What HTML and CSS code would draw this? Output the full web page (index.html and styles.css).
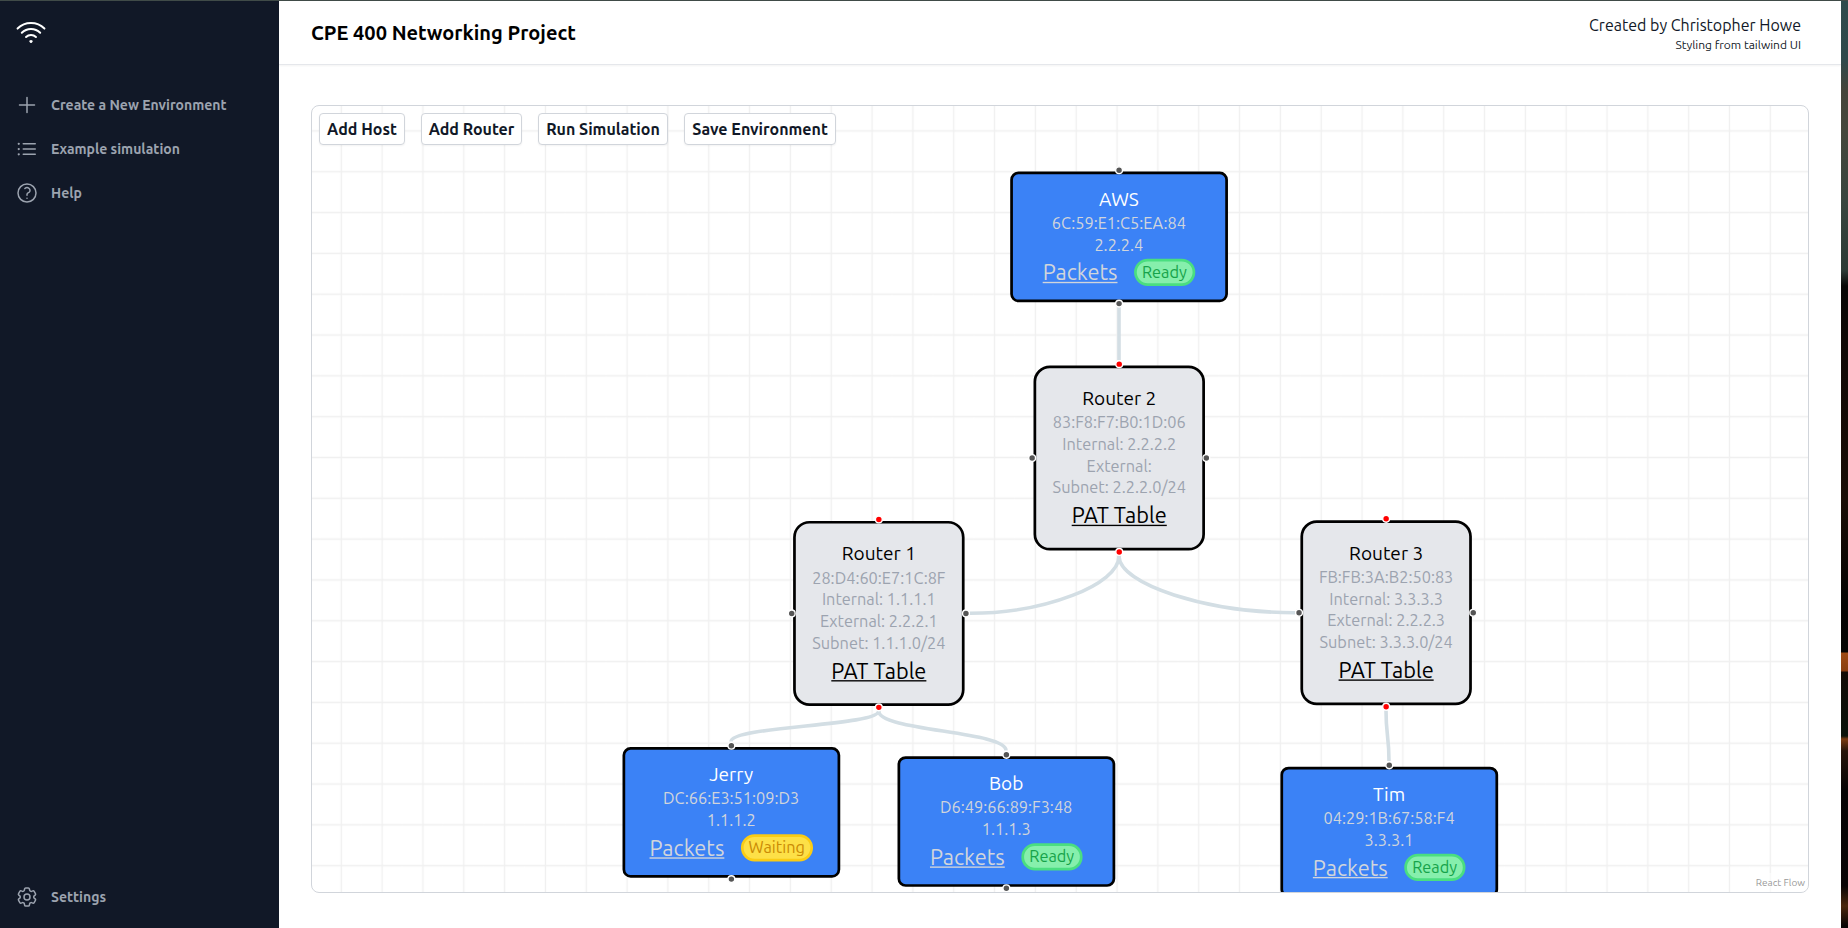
FILE: index.html
```html
<!DOCTYPE html>
<html lang="en">
<head>
<meta charset="utf-8">
<title>CPE 400 Networking Project</title>
<link rel="stylesheet" href="styles.css">
</head>
<body>
<div class="window">
  <aside class="sidebar">
    <svg class="logo" viewBox="0 0 24 24"><path d="M8.288 15.038a5.25 5.25 0 017.424 0M5.106 11.856c3.807-3.808 9.98-3.808 13.788 0M1.924 8.674c5.565-5.565 14.587-5.565 20.152 0M12.53 18.22l-.53.53-.53-.53a.75.75 0 011.06 0z"/></svg>
    <nav class="nav">
      <a class="nav-item"><svg class="icon" viewBox="0 0 24 24"><path d="M12 4.5v15m7.5-7.5h-15"/></svg><span>Create a New Environment</span></a>
      <a class="nav-item"><svg class="icon" viewBox="0 0 24 24"><path d="M8.25 6.75h12M8.25 12h12m-12 5.25h12M3.75 6.75h.007v.008H3.75V6.75zm.375 0a.375.375 0 11-.75 0 .375.375 0 01.75 0zM3.75 12h.007v.008H3.75V12zm.375 0a.375.375 0 11-.75 0 .375.375 0 01.75 0zm-.375 5.25h.007v.008H3.75v-.008zm.375 0a.375.375 0 11-.75 0 .375.375 0 01.75 0z"/></svg><span>Example simulation</span></a>
      <a class="nav-item"><svg class="icon" viewBox="0 0 24 24"><path d="M9.879 7.519c1.171-1.025 3.071-1.025 4.242 0 1.172 1.025 1.172 2.687 0 3.712-.203.179-.43.326-.67.442-.745.361-1.45.999-1.45 1.827v.75M21 12a9 9 0 11-18 0 9 9 0 0118 0zm-9 5.25h.008v.008H12v-.008z"/></svg><span>Help</span></a>
    </nav>
    <a class="nav-item settings"><svg class="icon" viewBox="0 0 24 24"><path d="M9.594 3.94c.09-.542.56-.94 1.11-.94h2.593c.55 0 1.02.398 1.11.94l.213 1.281c.063.374.313.686.645.87.074.04.147.083.22.127.324.196.72.257 1.075.124l1.217-.456a1.125 1.125 0 011.37.49l1.296 2.247a1.125 1.125 0 01-.26 1.431l-1.003.827c-.293.24-.438.613-.431.992a6.759 6.759 0 010 .255c-.007.378.138.75.43.99l1.005.828c.424.35.534.954.26 1.43l-1.298 2.247a1.125 1.125 0 01-1.369.491l-1.217-.456c-.355-.133-.75-.072-1.076.124a6.57 6.57 0 01-.22.128c-.331.183-.581.495-.644.869l-.213 1.28c-.09.543-.56.941-1.11.941h-2.594c-.55 0-1.02-.398-1.11-.94l-.213-1.281c-.062-.374-.312-.686-.644-.87a6.52 6.52 0 01-.22-.127c-.325-.196-.72-.257-1.076-.124l-1.217.456a1.125 1.125 0 01-1.369-.49l-1.297-2.247a1.125 1.125 0 01.26-1.431l1.004-.827c.292-.24.437-.613.43-.992a6.932 6.932 0 010-.255c.007-.378-.138-.75-.43-.99l-1.004-.828a1.125 1.125 0 01-.26-1.43l1.297-2.247a1.125 1.125 0 011.37-.491l1.216.456c.356.133.751.072 1.076-.124.072-.044.146-.087.22-.128.332-.183.582-.495.644-.869l.214-1.281z"/><path d="M15 12a3 3 0 11-6 0 3 3 0 016 0z"/></svg><span>Settings</span></a>
  </aside>
  <div class="content">
    <header class="header">
      <h1 class="title">CPE 400 Networking Project</h1>
      <div class="credits">
        <div class="author">Created by Christopher Howe</div>
        <div class="styling">Styling from tailwind UI</div>
      </div>
    </header>
    <main class="main">
      <div class="flow">
        <svg class="canvas" width="1496" height="786">
          <defs>
            <pattern id="grid" x="8.9" y="4.5" width="40.83" height="40.82" patternUnits="userSpaceOnUse">
              <path d="M20.41 0V40.82M0 20.41H40.83"/>
            </pattern>
          </defs>
          <rect width="1496" height="786" fill="url(#grid)"/>
          <g class="edges">
            <path d="M807 201V254"/>
            <path d="M807 450C807 478.6 732.5 507.3 658 507.3"/>
            <path d="M807 450C807 478.3 895 506.7 983 506.7"/>
            <path d="M566.7 605C566.7 620 419 620 419 635.5"/>
            <path d="M566.7 605C566.7 625 694 625 694 644.5"/>
            <path d="M1074 604.4C1074 630 1077 630 1077 655"/>
          </g>
        </svg>
        <div class="toolbar">
          <button class="btn b-host">Add Host</button>
          <button class="btn b-router">Add Router</button>
          <button class="btn b-run">Run Simulation</button>
          <button class="btn b-save">Save Environment</button>
        </div>

        <div class="node host aws">
          <i class="handle top"></i><i class="handle bottom"></i>
          <div class="name">AWS</div><div class="info">6C:59:E1:C5:EA:84</div><div class="info">2.2.2.4</div>
          <div class="row"><a class="packets">Packets</a><span class="badge ready">Ready</span></div>
        </div>
        <div class="node host jerry">
          <i class="handle top"></i><i class="handle bottom"></i>
          <div class="name">Jerry</div><div class="info">DC:66:E3:51:09:D3</div><div class="info">1.1.1.2</div>
          <div class="row"><a class="packets">Packets</a><span class="badge waiting">Waiting</span></div>
        </div>
        <div class="node host bob">
          <i class="handle top"></i><i class="handle bottom"></i>
          <div class="name">Bob</div><div class="info">D6:49:66:89:F3:48</div><div class="info">1.1.1.3</div>
          <div class="row"><a class="packets">Packets</a><span class="badge ready">Ready</span></div>
        </div>
        <div class="node host tim">
          <i class="handle top"></i><i class="handle bottom"></i>
          <div class="name">Tim</div><div class="info">04:29:1B:67:58:F4</div><div class="info">3.3.3.1</div>
          <div class="row"><a class="packets">Packets</a><span class="badge ready">Ready</span></div>
        </div>

        <div class="node router r1">
          <i class="handle top red"></i><i class="handle bottom red"></i><i class="handle left"></i><i class="handle right"></i>
          <div class="name">Router 1</div><div class="info">28:D4:60:E7:1C:8F</div><div class="info">Internal: 1.1.1.1</div><div class="info">External: 2.2.2.1</div><div class="info">Subnet: 1.1.1.0/24</div>
          <div class="row"><a class="pat">PAT Table</a></div>
        </div>
        <div class="node router r2">
          <i class="handle top red"></i><i class="handle bottom red"></i><i class="handle left"></i><i class="handle right"></i>
          <div class="name">Router 2</div><div class="info">83:F8:F7:B0:1D:06</div><div class="info">Internal: 2.2.2.2</div><div class="info">External:</div><div class="info">Subnet: 2.2.2.0/24</div>
          <div class="row"><a class="pat">PAT Table</a></div>
        </div>
        <div class="node router r3">
          <i class="handle top red"></i><i class="handle bottom red"></i><i class="handle left"></i><i class="handle right"></i>
          <div class="name">Router 3</div><div class="info">FB:FB:3A:B2:50:83</div><div class="info">Internal: 3.3.3.3</div><div class="info">External: 2.2.2.3</div><div class="info">Subnet: 3.3.3.0/24</div>
          <div class="row"><a class="pat">PAT Table</a></div>
        </div>
        <div class="attribution">React Flow</div>
      </div>
    </main>
  </div>
  <div class="desktop"></div>
</div>
</body>
</html>
```
FILE: styles.css
```css
* { box-sizing: border-box; }
body { margin: 0; font-family: Ubuntu, "Noto Sans", sans-serif; color: #111827; background: #fff; }
.window { display: flex; height: 928px; border-top: 1px solid #404b48; overflow: hidden; }

.sidebar { width: 279px; flex: none; display: flex; flex-direction: column; background: #111827; padding: 16px 15px 19px; }
.logo { width: 32px; height: 32px; fill: none; stroke: #fff; stroke-width: 1.5; stroke-linecap: round; stroke-linejoin: round; }
.nav { margin-top: 44px; display: flex; flex-direction: column; gap: 20px; }
.nav-item { display: flex; align-items: center; gap: 12px; height: 24px; color: #9ca3af; font-size: 14px; font-weight: 600; line-height: 20px; white-space: nowrap; }
.icon { width: 24px; height: 24px; flex: none; fill: none; stroke: #9ca3af; stroke-width: 1.5; stroke-linecap: round; stroke-linejoin: round; }
.settings { margin-top: auto; }

.content { width: 1562px; flex: none; display: flex; flex-direction: column; background: #fff; }
.header { height: 64px; flex: none; display: flex; justify-content: space-between; align-items: center; padding: 0 40px 0 32px; border-bottom: 1px solid #e5e7eb; box-shadow: 0 1px 2px rgba(0,0,0,.05); white-space: nowrap; }
.title { margin: 0; font-size: 20px; font-weight: 600; color: #000; line-height: 28px; }
.credits { text-align: right; }
.author { font-size: 16px; line-height: 24px; }
.styling { font-size: 12px; line-height: 16px; }
.main { flex: 1; padding: 40px 32px 34px; display: flex; }

.flow { position: relative; flex: 1; height: 788px; border: 1px solid #d1d5db; border-radius: 8px; overflow: hidden; }
.canvas { position: absolute; left: 0; top: 0; }
.canvas pattern path { fill: none; stroke: #f0f0f0; stroke-width: 1.36; }
.edges path { fill: none; stroke: #d3dee4; stroke-width: 3.6; }
.toolbar { position: relative; display: flex; gap: 16px; padding: 7px; }
.btn { height: 32px; padding: 0 0 1px; border: 1px solid #d1d5db; border-radius: 4px; background: #fff; box-shadow: 0 1px 2px rgba(0,0,0,.05); color: #111827; font-family: inherit; font-size: 16px; font-weight: 600; line-height: 24px; white-space: nowrap; }
.b-host { width: 86px; }
.b-router { width: 101px; }
.b-run { width: 130px; }
.b-save { width: 152px; }

.node { position: absolute; left: 0; top: 0; transform: translate(var(--x), var(--y)) scale(1.361); transform-origin: 0 0; border: 2px solid #000; text-align: center; white-space: nowrap; }
.host { width: 159.7px; height: 96px; padding: 8px 0; border-radius: 6px; background: #3b82f6; color: #d1d5db; }
.router { width: 126px; height: 136px; padding: 12px 0; border-radius: 12px; background: #e5e7eb; color: #9ca3af; }
.aws { --x: 698.2px; --y: 65.6px; }
.jerry { --x: 310.5px; --y: 641.1px; }
.bob { --x: 585.5px; --y: 650.2px; }
.tim { --x: 968.4px; --y: 660.7px; }
.r1 { --x: 481.1px; --y: 414.9px; }
.r2 { --x: 721.5px; --y: 259.5px; }
.r3 { --x: 988.4px; --y: 414.2px; }
.name { font-size: 14px; line-height: 20px; color: #000; }
.host .name { color: #fff; }
.info { font-size: 12px; line-height: 16px; }
.row { display: flex; justify-content: center; align-items: center; gap: 12px; height: 24px; }
.packets, .pat { font-size: 16px; line-height: 24px; text-decoration: underline; }
.pat { color: #000; }
.badge { height: 20px; border: 2px solid; border-radius: 11px; font-size: 12px; line-height: 16px; }
.ready { width: 45px; background: #86efac; border-color: #4ade80; color: #16a34a; }
.waiting { width: 53px; background: #fde047; border-color: #facc15; color: #ca8a04; }

.handle { position: absolute; width: 6px; height: 6px; border: 1px solid #fff; border-radius: 50%; background: #555; }
.red { background: #f00; }
.handle.top { top: -6px; left: calc(50% - 3px); }
.handle.bottom { bottom: -6px; left: calc(50% - 3px); }
.handle.left { left: -6px; top: calc(50% - 3px); }
.handle.right { right: -6px; top: calc(50% - 3px); }
.attribution { position: absolute; right: 0; bottom: 0; padding: 2px 3px; background: rgba(255,255,255,.5); color: #999; font-size: 10px; line-height: 15px; }

.desktop { width: 7px; flex: none; background: linear-gradient(#2f4a4c 0, #30494b 60px, #45443a 90px, #45473c 130px, #39453f 200px, #2c3a35 270px, #080605 285px, #100805 340px, #1a0d06 500px, #050302 600px, #060403 651px, #a04a14 652px, #8a3d10 670px, #120b06 671px, #0a120a 735px, #7a3a10 738px, #26140a 750px, #060304 790px, #0a0506 885px, #4a260c 905px, #080404 925px); }
```
